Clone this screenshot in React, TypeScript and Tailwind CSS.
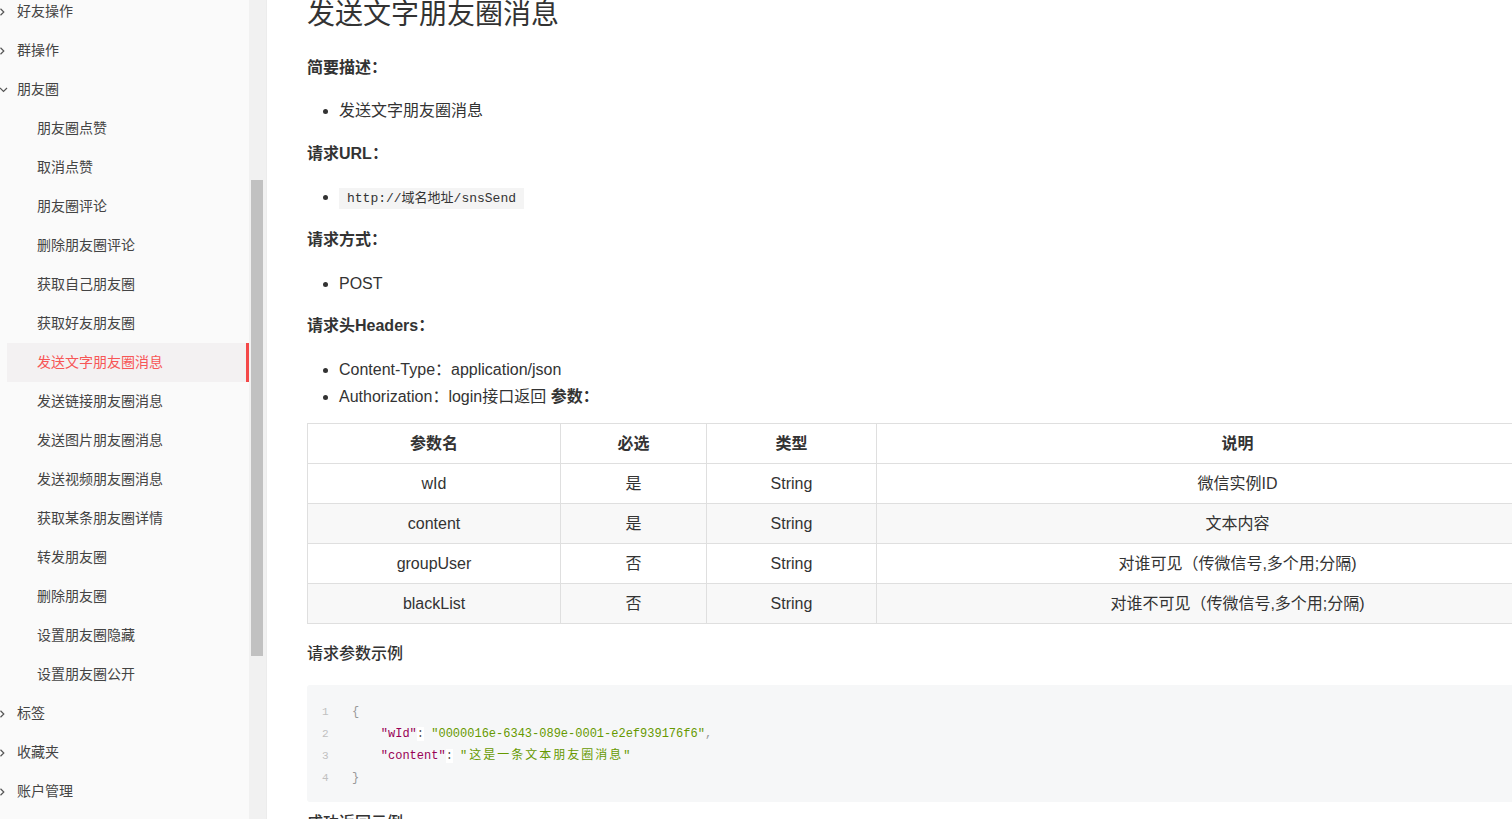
import React from "react";

const FONT = { fontFamily: '"Liberation Sans", Arial, "Noto Sans CJK SC", sans-serif' };
const MONO = { fontFamily: '"Liberation Mono", "DejaVu Sans Mono", "Noto Sans CJK SC", monospace' };

function ChevronRight() {
  return (
    <svg width="6" height="10" viewBox="0 0 6 10" className="mr-[11px] shrink-0">
      <path d="M0.5 1.8 L3.8 5 L0.5 8.2" fill="none" stroke="#555" strokeWidth="1.2" />
    </svg>
  );
}
function ChevronDown() {
  return (
    <svg width="8" height="8" viewBox="0 0 8 8" className="mr-[9px] shrink-0">
      <path d="M0 2 L3.5 5.5 L7 2" fill="none" stroke="#555" strokeWidth="1.2" />
    </svg>
  );
}

const subItems = [
  "朋友圈点赞",
  "取消点赞",
  "朋友圈评论",
  "删除朋友圈评论",
  "获取自己朋友圈",
  "获取好友朋友圈",
  "发送文字朋友圈消息",
  "发送链接朋友圈消息",
  "发送图片朋友圈消息",
  "发送视频朋友圈消息",
  "获取某条朋友圈详情",
  "转发朋友圈",
  "删除朋友圈",
  "设置朋友圈隐藏",
  "设置朋友圈公开",
];

function TopItem({ label, open }: { label: string; open?: boolean }) {
  return (
    <div className="flex h-[39px] items-center text-[14px] text-[#444]">
      {open ? <ChevronDown /> : <ChevronRight />}
      <span>{label}</span>
    </div>
  );
}

function Sidebar() {
  return (
    <div className="flex h-full shrink-0 border-r border-[#ececec]">
      <div className="w-[249px] bg-[#fafafa] overflow-hidden">
        <div className="-mt-[8px]">
          <TopItem label="好友操作" />
          <TopItem label="群操作" />
          <TopItem label="朋友圈" open />
          {subItems.map((s) =>
            s === "发送文字朋友圈消息" ? (
              <div
                key={s}
                className="ml-[7px] flex h-[39px] items-center border-r-[3px] border-[#f44848] bg-[#f3f1f2] pl-[30px] text-[14px] text-[#f75656]"
              >
                {s}
              </div>
            ) : (
              <div key={s} className="ml-[7px] flex h-[39px] items-center pl-[30px] text-[14px] text-[#444]">
                {s}
              </div>
            )
          )}
          <TopItem label="标签" />
          <TopItem label="收藏夹" />
          <TopItem label="账户管理" />
        </div>
      </div>
      <div className="w-[17px] bg-[#f1f1f1] pt-[180px]">
        <div className="ml-[2px] h-[476px] w-[12px] bg-[#c1c1c1]" />
      </div>
    </div>
  );
}

const rows = [
  ["wId", "是", "String", "微信实例ID"],
  ["content", "是", "String", "文本内容"],
  ["groupUser", "否", "String", "对谁可见（传微信号,多个用;分隔)"],
  ["blackList", "否", "String", "对谁不可见（传微信号,多个用;分隔)"],
];

function H({ children, mt }: { children: React.ReactNode; mt: string }) {
  return <div className={`${mt} text-[16px] font-bold leading-[24px] text-[#333]`}>{children}</div>;
}

export default function App() {
  return (
    <div className="flex h-[819px] w-[1512px] overflow-hidden bg-white" style={FONT}>
      <Sidebar />
      <main className="min-w-0 flex-1 overflow-hidden pl-[40px] text-[#333]">
        <div className="w-[1400px]">
          <h1 className="-mt-[5px] text-[28px] font-normal leading-[40px] text-[#333]">发送文字朋友圈消息</h1>
          <H mt="mt-[21px]">简要描述：</H>
          <ul className="mt-[17px] list-disc pl-[32px] text-[16px] leading-[27px]">
            <li>发送文字朋友圈消息</li>
          </ul>
          <H mt="mt-[18px]">请求URL：</H>
          <ul className="mt-[17px] list-disc pl-[32px] text-[16px] leading-[27px]">
            <li>
              <code className="bg-[#f4f4f4] px-[8px] py-[3px] text-[13px] text-[#333]" style={MONO}>
                http://域名地址/snsSend
              </code>
            </li>
          </ul>
          <H mt="mt-[16px]">请求方式：</H>
          <ul className="mt-[18px] list-disc pl-[32px] text-[16px] leading-[27px]">
            <li>POST</li>
          </ul>
          <H mt="mt-[17px]">请求头Headers：</H>
          <ul className="mt-[18px] list-disc pl-[32px] text-[16px] leading-[27px]">
            <li>Content-Type：application/json</li>
            <li>
              Authorization：login接口返回 <b>参数：</b>
            </li>
          </ul>
          <table className="mt-[13px] w-[1291px] table-fixed border-collapse text-[16px] text-[#333]">
            <colgroup>
              <col className="w-[253px]" />
              <col className="w-[146px]" />
              <col className="w-[170px]" />
              <col className="w-[722px]" />
            </colgroup>
            <thead>
              <tr className="h-[40px]">
                {["参数名", "必选", "类型", "说明"].map((h) => (
                  <th key={h} className="border border-[#dfdfdf] text-center font-bold">
                    {h}
                  </th>
                ))}
              </tr>
            </thead>
            <tbody>
              {rows.map((r, i) => (
                <tr key={r[0]} className={`h-[40px] ${i % 2 === 1 ? "bg-[#f8f8f8]" : "bg-white"}`}>
                  {r.map((c, j) => (
                    <td key={j} className="border border-[#dfdfdf] text-center">
                      {c}
                    </td>
                  ))}
                </tr>
              ))}
            </tbody>
          </table>
          <div className="mt-[18px] text-[16px] font-medium leading-[24px] text-[#333]">请求参数示例</div>
          <div className="mt-[19px] rounded-[3px] bg-[#f6f7f8] pb-[13px] pl-[15px] pt-[16px] text-[12px] leading-[22px]" style={MONO}>
            <div className="flex">
              <span className="w-[30px] text-[11px] text-[#c0c0c0]">1</span>
              <span className="text-[#999]">{"{"}</span>
            </div>
            <div className="flex">
              <span className="w-[30px] text-[11px] text-[#c0c0c0]">2</span>
              <span className="whitespace-pre">
                <span>{"    "}</span>
                <span className="text-[#990055]">"wId"</span>
                <span className="bg-white text-[#555]">:</span>
                <span> </span>
                <span className="text-[#669900]">"0000016e-6343-089e-0001-e2ef939176f6"</span>
                <span className="text-[#999]">,</span>
              </span>
            </div>
            <div className="flex">
              <span className="w-[30px] text-[11px] text-[#c0c0c0]">3</span>
              <span className="whitespace-pre">
                <span>{"    "}</span>
                <span className="text-[#990055]">"content"</span>
                <span className="bg-white text-[#555]">:</span>
                <span> </span>
                <span className="tracking-[2px] text-[#669900]">"这是一条文本朋友圈消息"</span>
              </span>
            </div>
            <div className="flex">
              <span className="w-[30px] text-[11px] text-[#c0c0c0]">4</span>
              <span className="text-[#999]">{"}"}</span>
            </div>
          </div>
          <div className="mt-[9px] text-[16px] font-medium leading-[24px] text-[#333]">成功返回示例</div>
        </div>
      </main>
    </div>
  );
}
